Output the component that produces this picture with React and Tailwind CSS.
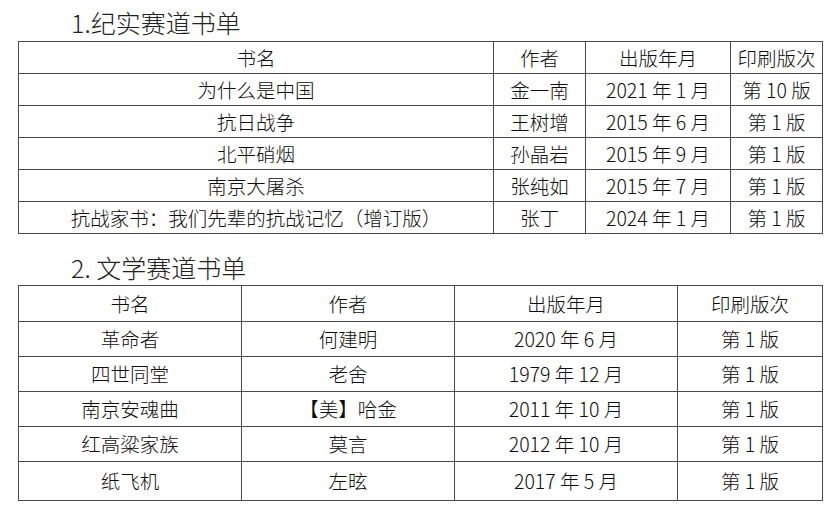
const FONT = "font-['Noto_Sans_CJK_SC','Noto_Sans',sans-serif]";

const docBooks = [
  ["为什么是中国", "金一南", "2021 年 1 月", "第 10 版"],
  ["抗日战争", "王树增", "2015 年 6 月", "第 1 版"],
  ["北平硝烟", "孙晶岩", "2015 年 9 月", "第 1 版"],
  ["南京大屠杀", "张纯如", "2015 年 7 月", "第 1 版"],
  ["抗战家书：我们先辈的抗战记忆（增订版）", "张丁", "2024 年 1 月", "第 1 版"],
];

const litBooks = [
  ["革命者", "何建明", "2020 年 6 月", "第 1 版"],
  ["四世同堂", "老舍", "1979 年 12 月", "第 1 版"],
  ["南京安魂曲", "【美】哈金", "2011 年 10 月", "第 1 版"],
  ["红高粱家族", "莫言", "2012 年 10 月", "第 1 版"],
  ["纸飞机", "左昡", "2017 年 5 月", "第 1 版"],
];

const header = ["书名", "作者", "出版年月", "印刷版次"];

function BookTable({ rows, cols, heights }) {
  const all = [header, ...rows];
  return (
    <div className={`grid ${cols} border-l border-t border-[#4a4a4a] w-[805px]`}>
      {all.map((row, i) =>
        row.map((cell, j) => (
          <div
            key={i + "-" + j}
            className={`flex items-center justify-center border-r border-b border-[#4a4a4a] text-[19.5px] font-light text-[#0d0d0d] whitespace-nowrap ${heights[i]}`}
          >
            {cell}
          </div>
        ))
      )}
    </div>
  );
}

export default function App() {
  return (
    <div className={`w-[838px] h-[514px] bg-white pl-[18px] ${FONT}`}>
      <div className="pt-[4px] pl-[53px] text-[25px] leading-[37px] font-light text-[#222]">1.纪实赛道书单</div>
      <BookTable
        rows={docBooks}
        cols="grid-cols-[475px_92px_145px_92px]"
        heights={["h-[32px]", "h-[32px]", "h-[32px]", "h-[32px]", "h-[32px]", "h-[32px]"]}
      />
      <div className="pt-[15px] pl-[53px] text-[25px] leading-[36px] font-light text-[#222]">2. 文学赛道书单</div>
      <BookTable
        rows={litBooks}
        cols="grid-cols-[223px_213px_223px_145px]"
        heights={["h-[36px]", "h-[35px]", "h-[35px]", "h-[35px]", "h-[35px]", "h-[39px]"]}
      />
    </div>
  );
}
